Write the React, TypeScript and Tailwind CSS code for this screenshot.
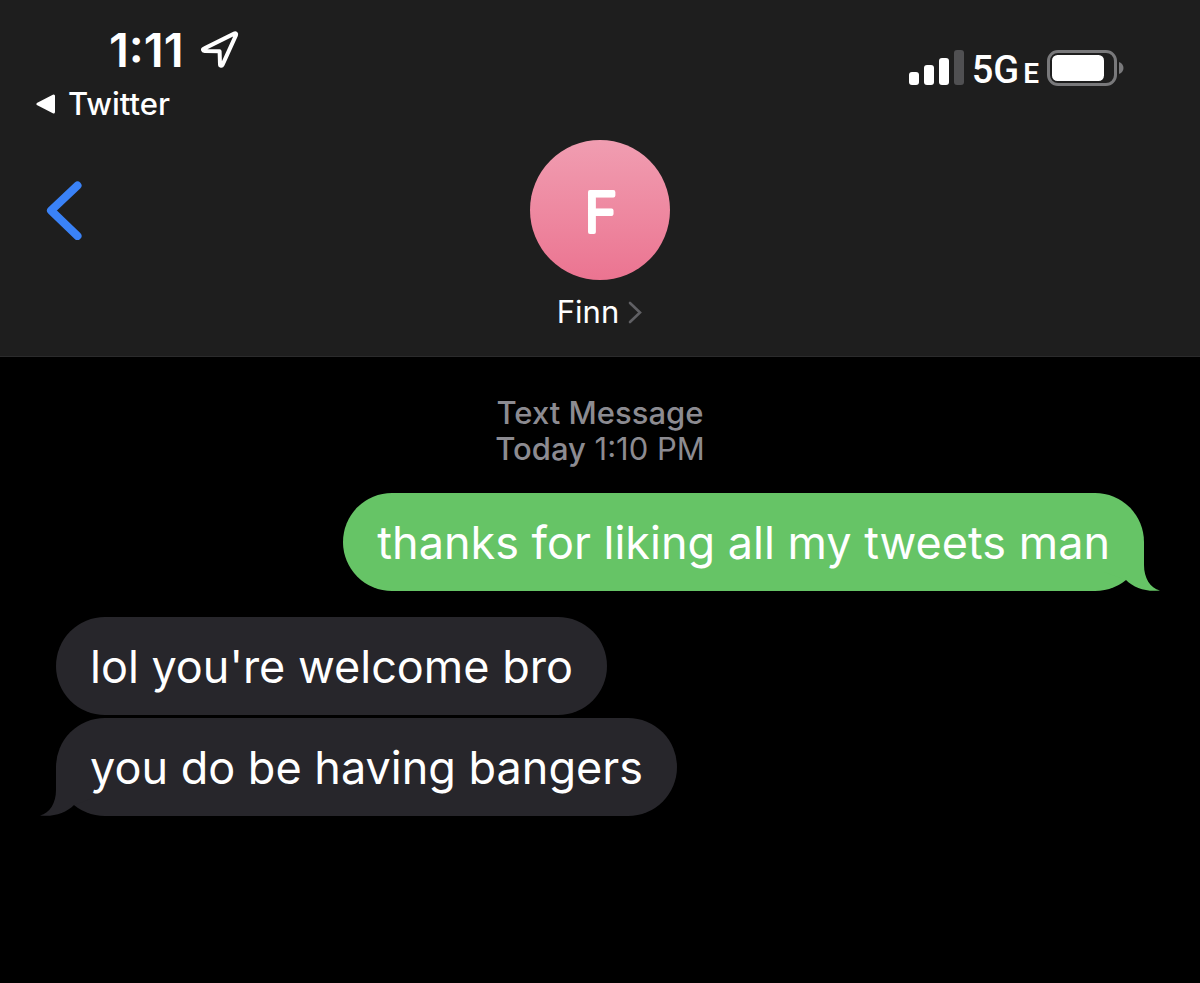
type Message = {
  text: string;
  mine: boolean;
  tail: boolean;
};

const messages: Message[] = [
  { text: "thanks for liking all my tweets man", mine: true, tail: true },
  { text: "lol you're welcome bro", mine: false, tail: false },
  { text: "you do be having bangers", mine: false, tail: true },
];

function LocationIcon() {
  return (
    <svg aria-hidden="true" className="h-10 w-10" fill="none" viewBox="0 0 40 40">
      <path
        d="M4 18.6 34.2 3.6C35.6 2.9 36.6 3.8 36 5.2L22.6 34.6C21.8 36.4 20 36 20 34.2L19.6 21.2 4.6 21C2.8 20.9 2.4 19.3 4 18.6Z"
        stroke="white"
        strokeLinejoin="round"
        strokeWidth="4"
      />
    </svg>
  );
}

function SignalIcon() {
  return (
    <svg aria-label="Signal, three bars" className="h-9 w-14" role="img" viewBox="0 0 56 36">
      <rect fill="white" height="13" rx="3" width="10" x="1" y="22" />
      <rect fill="white" height="20" rx="3" width="10" x="16" y="15" />
      <rect fill="white" height="27" rx="3" width="10" x="31" y="8" />
      <rect fill="#505052" height="35" rx="3" width="10" x="46" y="0" />
    </svg>
  );
}

function BatteryIcon() {
  return (
    <svg aria-label="Battery" className="h-9 w-20" role="img" viewBox="0 0 80 36">
      <rect fill="none" height="33" rx="9.5" stroke="#79797b" strokeWidth="3" width="67" x="1.5" y="1.5" />
      <rect fill="white" height="26" rx="5.5" width="52" x="5" y="5" />
      <path d="M72 12C78 14 78 22 72 24Z" fill="#79797b" />
    </svg>
  );
}

function StatusBar() {
  return (
    <div className="flex items-start justify-between pr-[73px] pl-9">
      <div>
        <div className="flex items-center gap-4 pt-[26px] pl-[73px]">
          <time className="text-[47px] leading-[48px] font-semibold">1:11</time>
          <LocationIcon />
        </div>
        <a className="mt-3 flex items-center gap-3 text-[31px] leading-9 font-medium" href="#twitter">
          <svg aria-hidden="true" className="h-5 w-5" viewBox="0 0 20 20">
            <path
              d="M2 10 17.5 2V18Z"
              fill="white"
              stroke="white"
              strokeLinejoin="round"
              strokeWidth="3"
            />
          </svg>
          Twitter
        </a>
      </div>
      <div className="flex items-center gap-2 pt-10 font-[Roboto,sans-serif]">
        <SignalIcon />
        <span className="flex items-baseline gap-1 pt-2 leading-[44px]">
          <span className="text-[38px] font-medium">5G</span>
          <span className="text-[28px] font-semibold">E</span>
        </span>
        <BatteryIcon />
      </div>
    </div>
  );
}

function Avatar() {
  return (
    <span className="block h-[140px] w-[140px] rounded-full bg-linear-to-b from-[#f09db1] to-[#eb7491]">
      <svg className="h-full w-full" viewBox="0 0 140 140">
        <text
          className="text-[55px] font-light"
          fill="white"
          stroke="white"
          strokeLinejoin="round"
          strokeWidth="4"
          textAnchor="middle"
          x="71"
          y="92"
        >
          F
        </text>
      </svg>
    </span>
  );
}

function ChatHeader() {
  return (
    <header className="border-b border-[#2b2b2c] bg-[#1e1e1e] pb-[26px]">
      <StatusBar />
      <div className="mt-[18px] grid grid-cols-[1fr_auto_1fr] items-start px-[46px]">
        <button aria-label="Back" className="mt-10 w-9 cursor-pointer" type="button">
          <svg aria-hidden="true" className="h-[60px] w-9" fill="none" viewBox="0 0 36 60">
            <path
              d="M31.5 5.5 5 30.5 31.5 56"
              stroke="#3a82f7"
              strokeLinecap="round"
              strokeLinejoin="round"
              strokeWidth="8"
            />
          </svg>
        </button>
        <button className="flex cursor-pointer flex-col items-center gap-3.5" type="button">
          <Avatar />
          <span className="flex items-center gap-2 text-[31px] leading-9">
            Finn
            <svg aria-hidden="true" className="h-6 w-4" fill="none" viewBox="0 0 16 24">
              <path d="M3 3 13 12.5 3 22" stroke="#606064" strokeLinecap="round" strokeWidth="2.6" />
            </svg>
          </span>
        </button>
      </div>
    </header>
  );
}

function Bubble({ text, mine, tail }: Message) {
  return (
    <li
      className={
        mine
          ? "relative mb-[26px] self-end rounded-[49px] bg-[#66c466] px-[34px] pt-[21px] pb-[19px]"
          : "relative mb-[3px] self-start rounded-[49px] bg-[#27262b] px-[34px] pt-[21px] pb-[19px]"
      }
    >
      {tail ? (
        <svg
          aria-hidden="true"
          className={
            mine
              ? "absolute -right-4 bottom-0 h-[49px] w-14 text-[#66c466]"
              : "absolute bottom-0 -left-4 h-[49px] w-14 -scale-x-100 text-[#27262b]"
          }
          viewBox="0 0 56 49"
        >
          <path d="M0 0H40V23C40 36 46 46 56 48.5C42 50 30 46 22 38L0 30Z" fill="currentColor" />
        </svg>
      ) : null}
      <p className="relative text-[45px] leading-[58px]">{text}</p>
    </li>
  );
}

export default function App() {
  return (
    <main className="min-h-screen bg-black font-[Inter,sans-serif] text-white">
      <ChatHeader />
      <section aria-label="Messages" className="px-14 pt-[38px] pb-10">
        <p className="text-center text-[31px] leading-9 text-[#8c8b91]">
          <span className="block font-medium">Text Message</span>
          <span className="font-medium">Today</span> 1:10 PM
        </p>
        <ul className="mt-[26px] flex flex-col">
          {messages.map((message) => (
            <Bubble key={message.text} {...message} />
          ))}
        </ul>
      </section>
    </main>
  );
}
